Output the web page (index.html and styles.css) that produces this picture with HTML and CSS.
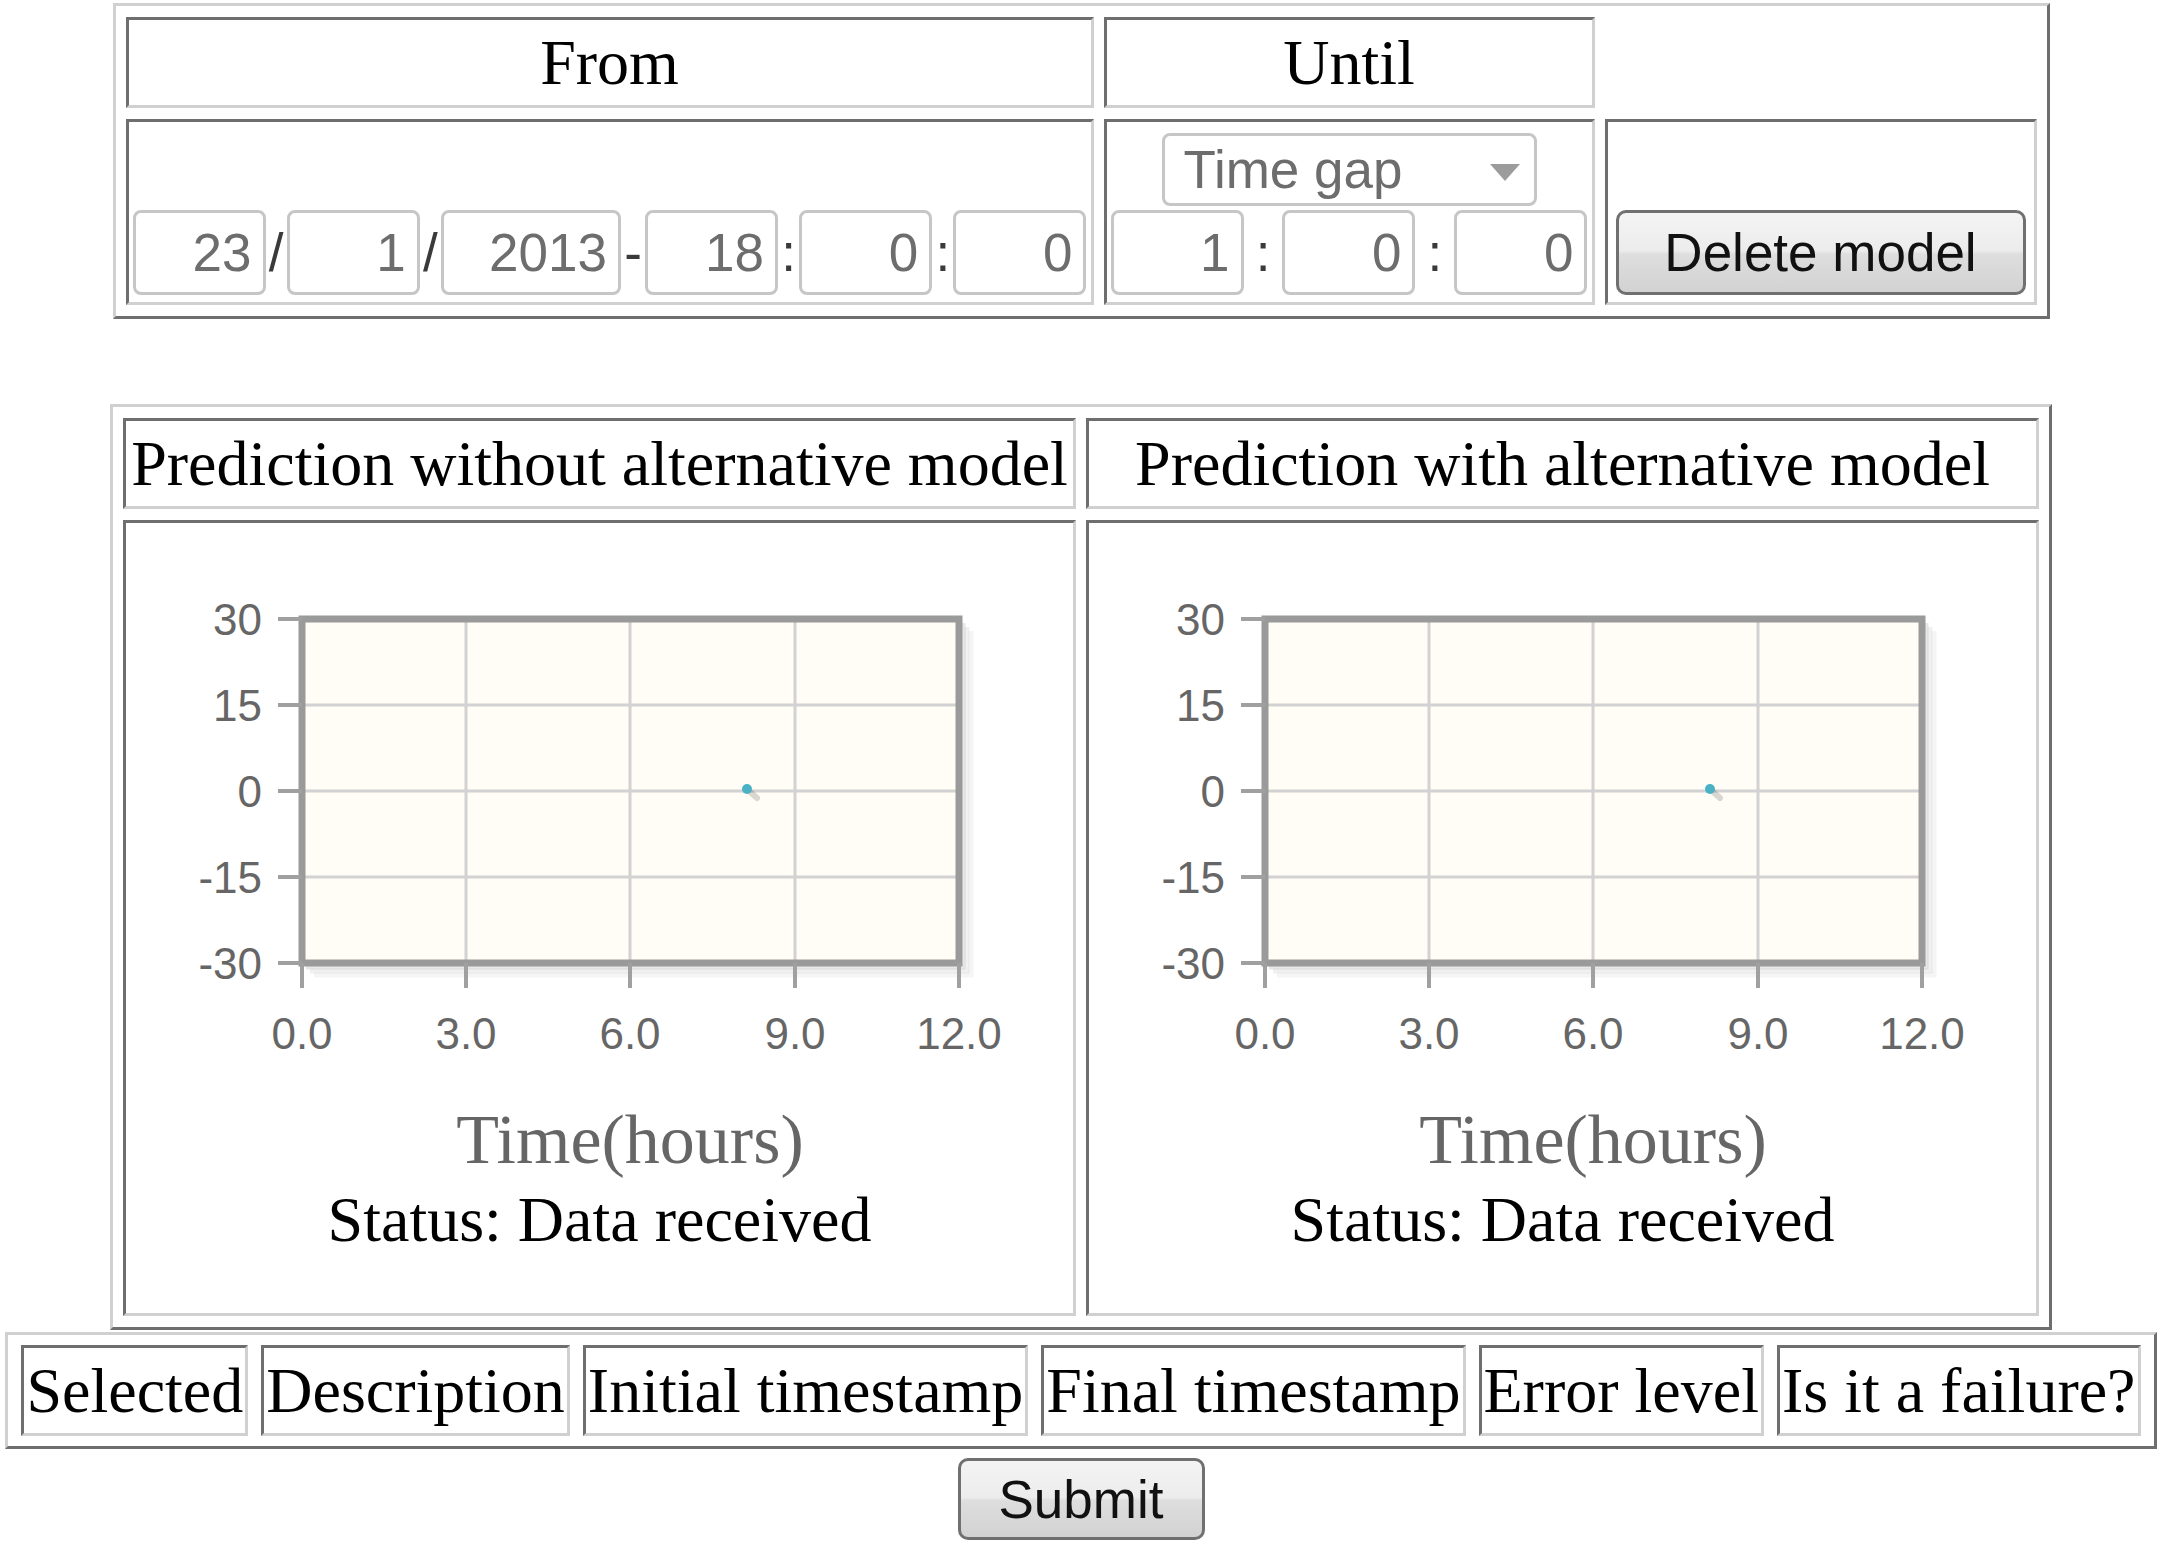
FILE: index.html
```html
<!DOCTYPE html>
<html lang="en">
<head>
  <meta charset="UTF-8" />
  <title>Prediction model</title>
  <link rel="stylesheet" href="styles.css">
</head>
<body>
  <table class="range">
    <tr>
      <td class="head">From</td>
      <td class="head">Until</td>
    </tr>
    <tr>
      <td class="from">
        <div class="fields">
          <input class="num" type="text" value="23"><span class="sep">/</span>
          <input class="num" type="text" value="1"><span class="sep">/</span>
          <input class="num year" type="text" value="2013"><span class="sep">-</span>
          <input class="num" type="text" value="18"><span class="sep">:</span>
          <input class="num" type="text" value="0"><span class="sep">:</span>
          <input class="num" type="text" value="0">
        </div>
      </td>
      <td class="until">
        <div class="gap">
          <span class="select-wrap">
            <select class="gap-select">
              <option>Time gap</option>
            </select>
          </span>
        </div>
        <div class="fields">
          <input class="num" type="text" value="1"><span class="sep">:</span>
          <input class="num" type="text" value="0"><span class="sep">:</span>
          <input class="num" type="text" value="0">
        </div>
      </td>
      <td class="actions">
        <button class="btn delete-btn">Delete model</button>
      </td>
    </tr>
  </table>

  <table class="charts">
    <tr>
      <td class="head">Prediction without alternative model</td>
      <td class="head">Prediction with alternative model</td>
    </tr>
    <tr>
      <td class="chart-cell">
        <svg class="chart" width="939" height="655" viewBox="0 0 939 655">
          <rect x="172" y="91" width="657" height="344" fill="#fffdf6"/>
          <path d="M176 439 H833 V95" fill="none" stroke="rgba(0,0,0,0.09)" stroke-width="5"/>
          <path d="M180 443 H837 V99" fill="none" stroke="rgba(0,0,0,0.06)" stroke-width="5"/>
          <path d="M184 447 H841 V103" fill="none" stroke="rgba(0,0,0,0.04)" stroke-width="5"/>
          <g stroke="#d2d2d2" stroke-width="3">
            <line x1="336" y1="91" x2="336" y2="435"/>
            <line x1="500" y1="91" x2="500" y2="435"/>
            <line x1="665" y1="91" x2="665" y2="435"/>
            <line x1="172" y1="177" x2="829" y2="177"/>
            <line x1="172" y1="263" x2="829" y2="263"/>
            <line x1="172" y1="349" x2="829" y2="349"/>
          </g>
          <rect x="172" y="91" width="657" height="344" fill="none" stroke="#9a9a9a" stroke-width="7"/>
          <g stroke="#a0a0a0" stroke-width="4">
            <line x1="148" y1="91" x2="172" y2="91"/>
            <line x1="148" y1="177" x2="172" y2="177"/>
            <line x1="148" y1="263" x2="172" y2="263"/>
            <line x1="148" y1="349" x2="172" y2="349"/>
            <line x1="148" y1="435" x2="172" y2="435"/>
            <line x1="172" y1="435" x2="172" y2="460"/>
            <line x1="336" y1="435" x2="336" y2="460"/>
            <line x1="500" y1="435" x2="500" y2="460"/>
            <line x1="665" y1="435" x2="665" y2="460"/>
            <line x1="829" y1="435" x2="829" y2="460"/>
          </g>
          <g class="tick" text-anchor="end">
            <text x="132" y="107">30</text>
            <text x="132" y="193">15</text>
            <text x="132" y="279">0</text>
            <text x="132" y="365">-15</text>
            <text x="132" y="451">-30</text>
          </g>
          <g class="tick" text-anchor="middle">
            <text x="172" y="521">0.0</text>
            <text x="336" y="521">3.0</text>
            <text x="500" y="521">6.0</text>
            <text x="665" y="521">9.0</text>
            <text x="829" y="521">12.0</text>
          </g>
          <line x1="618" y1="262" x2="627" y2="270" stroke="rgba(0,0,0,0.15)" stroke-width="6" stroke-linecap="round"/>
          <circle cx="617" cy="261" r="5" fill="#4bb2c5"/>
          <text class="axis-label" x="500" y="635" text-anchor="middle">Time(hours)</text>
        </svg>
        <div class="status">Status: Data received</div>
      </td>
      <td class="chart-cell">
        <svg class="chart" width="939" height="655" viewBox="0 0 939 655">
          <rect x="172" y="91" width="657" height="344" fill="#fffdf6"/>
          <path d="M176 439 H833 V95" fill="none" stroke="rgba(0,0,0,0.09)" stroke-width="5"/>
          <path d="M180 443 H837 V99" fill="none" stroke="rgba(0,0,0,0.06)" stroke-width="5"/>
          <path d="M184 447 H841 V103" fill="none" stroke="rgba(0,0,0,0.04)" stroke-width="5"/>
          <g stroke="#d2d2d2" stroke-width="3">
            <line x1="336" y1="91" x2="336" y2="435"/>
            <line x1="500" y1="91" x2="500" y2="435"/>
            <line x1="665" y1="91" x2="665" y2="435"/>
            <line x1="172" y1="177" x2="829" y2="177"/>
            <line x1="172" y1="263" x2="829" y2="263"/>
            <line x1="172" y1="349" x2="829" y2="349"/>
          </g>
          <rect x="172" y="91" width="657" height="344" fill="none" stroke="#9a9a9a" stroke-width="7"/>
          <g stroke="#a0a0a0" stroke-width="4">
            <line x1="148" y1="91" x2="172" y2="91"/>
            <line x1="148" y1="177" x2="172" y2="177"/>
            <line x1="148" y1="263" x2="172" y2="263"/>
            <line x1="148" y1="349" x2="172" y2="349"/>
            <line x1="148" y1="435" x2="172" y2="435"/>
            <line x1="172" y1="435" x2="172" y2="460"/>
            <line x1="336" y1="435" x2="336" y2="460"/>
            <line x1="500" y1="435" x2="500" y2="460"/>
            <line x1="665" y1="435" x2="665" y2="460"/>
            <line x1="829" y1="435" x2="829" y2="460"/>
          </g>
          <g class="tick" text-anchor="end">
            <text x="132" y="107">30</text>
            <text x="132" y="193">15</text>
            <text x="132" y="279">0</text>
            <text x="132" y="365">-15</text>
            <text x="132" y="451">-30</text>
          </g>
          <g class="tick" text-anchor="middle">
            <text x="172" y="521">0.0</text>
            <text x="336" y="521">3.0</text>
            <text x="500" y="521">6.0</text>
            <text x="665" y="521">9.0</text>
            <text x="829" y="521">12.0</text>
          </g>
          <line x1="618" y1="262" x2="627" y2="270" stroke="rgba(0,0,0,0.15)" stroke-width="6" stroke-linecap="round"/>
          <circle cx="617" cy="261" r="5" fill="#4bb2c5"/>
          <text class="axis-label" x="500" y="635" text-anchor="middle">Time(hours)</text>
        </svg>
        <div class="status">Status: Data received</div>
      </td>
    </tr>
  </table>

  <table class="events">
    <tr>
      <td>Selected</td>
      <td>Description</td>
      <td>Initial timestamp</td>
      <td>Final timestamp</td>
      <td>Error level</td>
      <td>Is it a failure?</td>
    </tr>
  </table>

  <div class="submit-row">
    <button class="btn submit-btn">Submit</button>
  </div>
</body>
</html>
```

FILE: styles.css
```css
body {
  margin: 3px 4px 0;
  background: #fff;
  color: #000;
  font-family: "Liberation Serif", "Times New Roman", serif;
  font-size: 64px;
}

table {
  border-collapse: separate;
  border-spacing: 10px 11px;
  border: 3px solid;
  border-color: #d0d0d0 #6e6e6e #6e6e6e #d0d0d0;
  margin: 0 auto;
}
td {
  border: 3px solid;
  border-color: #6e6e6e #d0d0d0 #d0d0d0 #6e6e6e;
  padding: 5px 4px;
}
td.head {
  text-align: center;
  line-height: 75px;
  white-space: nowrap;
}

/* range row */
.from { width: 954px; vertical-align: bottom; }
.until { width: 477px; vertical-align: bottom; }
.actions { width: 418px; vertical-align: bottom; text-align: center; }

.fields {
  display: flex;
  align-items: center;
  justify-content: space-between;
  margin-bottom: 2px;
}
.sep {
  font-family: "Liberation Sans", Arial, sans-serif;
  font-size: 53px;
  color: #3a3a3a;
}

input.num {
  box-sizing: border-box;
  width: 133px;
  height: 85px;
  border: 3px solid #c6c6c6;
  border-radius: 8px;
  padding: 0 11px 0 4px;
  text-align: right;
  font-family: "Liberation Sans", Arial, sans-serif;
  font-size: 53px;
  color: #6d6d6d;
  background: #fff;
}
input.year { width: 180px; }

.gap {
  text-align: center;
  margin: 6px 0 4px;
  line-height: 0;
}
.select-wrap {
  position: relative;
  display: inline-block;
}
.select-wrap::after {
  content: '';
  position: absolute;
  right: 17px;
  top: 31px;
  border-left: 15px solid transparent;
  border-right: 15px solid transparent;
  border-top: 17px solid #9c9c9c;
}
.gap-select {
  appearance: none;
  -webkit-appearance: none;
  box-sizing: border-box;
  width: 375px;
  height: 73px;
  border: 3px solid #c6c6c6;
  border-radius: 8px;
  padding: 0 0 0 19px;
  background: #fff;
  font-family: "Liberation Sans", Arial, sans-serif;
  font-size: 53px;
  color: #6d6d6d;
}

.btn {
  box-sizing: border-box;
  height: 85px;
  border: 3px solid #707070;
  border-radius: 10px;
  background: linear-gradient(#f4f4f4 0%, #ececec 48%, #dedede 52%, #d2d2d2 100%);
  font-family: "Liberation Sans", Arial, sans-serif;
  font-size: 53px;
  color: #111;
  padding: 0;
}
.delete-btn { width: 410px; margin-bottom: 2px; }

/* charts */
.charts { margin-top: 85px; }
.chart-cell { width: 939px; vertical-align: top; }
.chart { display: block; }
.tick {
  font-family: "Liberation Sans", Arial, sans-serif;
  font-size: 44px;
  fill: #666;
}
.axis-label {
  font-family: "Liberation Serif", "Times New Roman", serif;
  font-size: 70px;
  fill: #666;
}
.status {
  text-align: center;
  line-height: 74px;
  margin-bottom: 51px;
}

/* events */
.events {
  margin-top: 2px;
  border-spacing: 13px 10px;
}
.events td {
  padding: 5px 2px;
  line-height: 75px;
  white-space: nowrap;
}

.submit-row {
  text-align: center;
  margin-top: 9px;
}
.submit-btn { width: 247px; height: 82px; }
```
